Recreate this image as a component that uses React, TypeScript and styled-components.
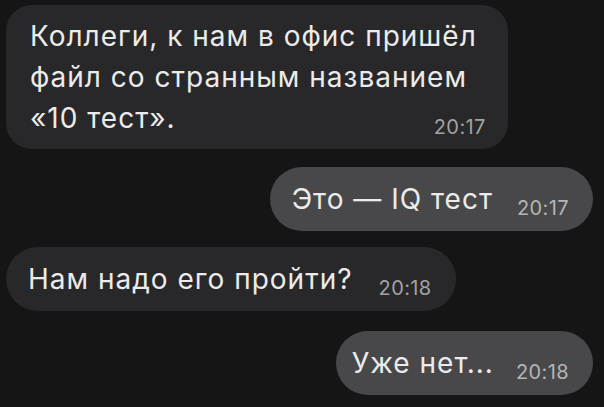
import React from 'react';
import styled, { createGlobalStyle } from 'styled-components';

const GlobalStyle = createGlobalStyle`
	html, body {
		margin: 0;
		padding: 0;
		background: #151515;
	}
	body {
		font-family: Inter, "Liberation Sans", Arial, sans-serif;
		-webkit-font-smoothing: antialiased;
	}
`;

interface Message {
	id: number,
	lines: string[],
	time: string,
	outgoing: boolean,
	gap: number,
	padLeft: number,
	timeGap: number
}

const messages: Message[] = [
	{ id: 1, lines: ['Коллеги, к нам в офис пришёл', 'файл со странным названием', '«10 тест».'], time: '20:17', outgoing: false, gap: 5, padLeft: 24, timeGap: 27 },
	{ id: 2, lines: ['Это — IQ тест'], time: '20:17', outgoing: true, gap: 18, padLeft: 22, timeGap: 24 },
	{ id: 3, lines: ['Нам надо его пройти?'], time: '20:18', outgoing: false, gap: 16, padLeft: 22, timeGap: 26 },
	{ id: 4, lines: ['Уже нет...'], time: '20:18', outgoing: true, gap: 20, padLeft: 16, timeGap: 22 }
];

const Screen = styled.div`
	width: 604px;
	height: 407px;
	overflow: hidden;
	background: #151515;
	display: flex;
	flex-direction: column;
	padding: 0 11px 0 6px;
	box-sizing: border-box;
`;

const Row = styled.div<{ $outgoing: boolean, $gap: number }>`
	display: flex;
	justify-content: ${({ $outgoing }) => ($outgoing ? 'flex-end' : 'flex-start')};
	margin-top: ${({ $gap }) => $gap}px;
`;

const Bubble = styled.div<{ $outgoing: boolean, $multi: boolean, $padLeft: number }>`
	background: ${({ $outgoing }) => ($outgoing ? '#48484a' : '#28282a')};
	color: #ebebeb;
	border-radius: ${({ $multi }) => ($multi ? '26px' : '33px')};
	padding: ${({ $multi }) => ($multi ? '11px 31px 0 0' : '4px 24px 0 0')};
	padding-left: ${({ $padLeft }) => $padLeft}px;
	height: ${({ $multi }) => ($multi ? '144px' : '64px')};
	box-sizing: border-box;
	display: flex;
	flex-direction: column;
	justify-content: ${({ $multi }) => ($multi ? 'flex-start' : 'center')};
	font-size: 28px;
	line-height: 41px;
	letter-spacing: 1px;
`;

const Line = styled.div`
	white-space: nowrap;
`;

const LastLine = styled.div`
	display: flex;
	align-items: baseline;
	justify-content: space-between;
	white-space: nowrap;
`;

// the stamp in a long bubble hangs a little past the text column, into the right padding
const Time = styled.span<{ $outgoing: boolean, $gap: number, $hang: boolean }>`
	font-size: 20px;
	letter-spacing: 0.4px;
	color: ${({ $outgoing }) => ($outgoing ? '#b4b4b6' : '#a2a2a4')};
	margin-left: ${({ $gap }) => $gap}px;
	margin-right: ${({ $hang }) => ($hang ? '-9px' : '0')};
	position: relative;
	top: 6px;
`;

const App = () => {
	return (
		<>
			<GlobalStyle />
			<Screen>
				{messages.map(({ id, lines, time, outgoing, gap, padLeft, timeGap }) => {
					const head = lines.slice(0, -1);
					const last = lines[lines.length - 1];
					const multi = lines.length > 1;
					return (
						<Row key={id} $outgoing={outgoing} $gap={gap}>
							<Bubble $outgoing={outgoing} $multi={multi} $padLeft={padLeft}>
								{head.map((line) => (
									<Line key={line}>{line}</Line>
								))}
								<LastLine>
									<span>{last}</span>
									<Time $outgoing={outgoing} $gap={timeGap} $hang={multi}>{time}</Time>
								</LastLine>
							</Bubble>
						</Row>
					);
				})}
			</Screen>
		</>
	);
};

export default App;
